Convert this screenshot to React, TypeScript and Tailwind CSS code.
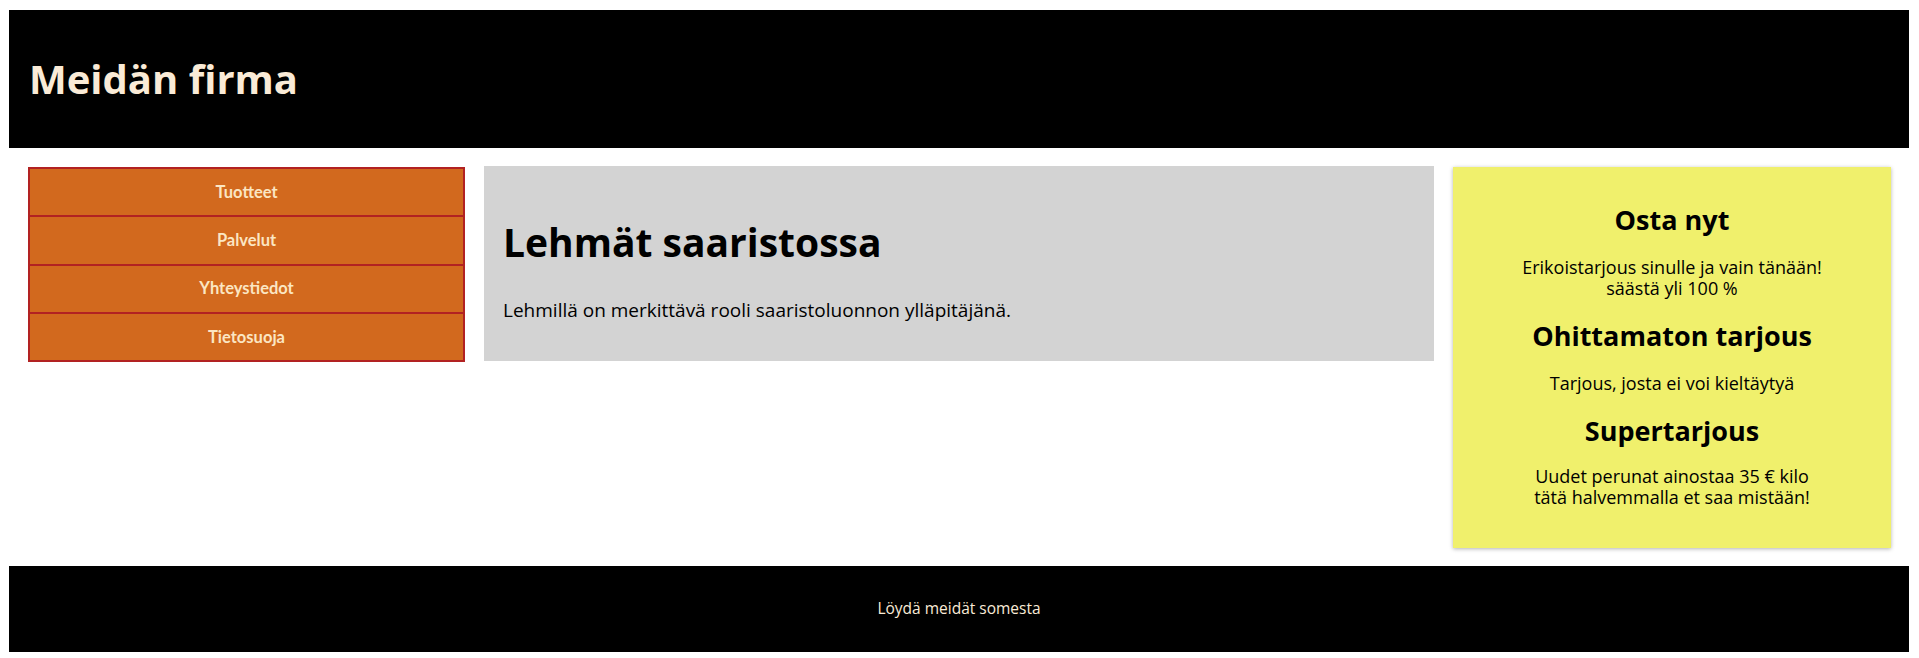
const navItems = ['Tuotteet', 'Palvelut', 'Yhteystiedot', 'Tietosuoja'];

const offers = [
  { title: 'Osta nyt', lines: ['Erikoistarjous sinulle ja vain tänään!', 'säästä yli 100 %'] },
  { title: 'Ohittamaton tarjous', lines: ['Tarjous, josta ei voi kieltäytyä'] },
  { title: 'Supertarjous', lines: ['Uudet perunat ainostaa 35 € kilo', 'tätä halvemmalla et saa mistään!'] },
];

export default function App() {
  return (
    <div className="min-h-screen bg-white pt-[10px] pl-[9px] pr-[10px] pb-[10px] font-['Open_Sans',sans-serif]">
      {/* header */}
      <header className="flex h-[138px] items-center bg-black pl-5">
        <h1 className="text-[40px] font-bold leading-[48px] text-[#faebd7]">Meidän firma</h1>
      </header>

      <div className="mt-[19px] flex items-start gap-[19px] pl-[19px]">
        {/* navigation */}
        <nav className="w-[437px] border-x-2 border-t-2 border-[#b22222] bg-[#d2691e]">
          <ul>
            {navItems.map(item => (
              <li
                key={item}
                className="flex h-[48.3px] items-center justify-center border-b-2 border-[#b22222] font-['Lato',sans-serif] text-[16.5px] font-bold text-[#fbe6c3]"
              >
                {item}
              </li>
            ))}
          </ul>
        </nav>

        {/* main article */}
        <main className="-mt-px h-[195px] w-[950px] bg-[#d3d3d3] px-[19px] pt-[52px]">
          <h2 className="text-[39px] font-bold leading-[48px] text-black">Lehmät saaristossa</h2>
          <p className="mt-[32px] text-[19px] leading-[24px] text-black">
            Lehmillä on merkittävä rooli saaristoluonnon ylläpitäjänä.
          </p>
        </main>

        {/* offers */}
        <aside className="w-[438px] bg-[#f0f06c] pt-[35px] pb-[40px] text-center text-black shadow-[0_1px_4px_rgba(0,0,0,0.3)]">
          {offers.map((offer, i) => (
            <div key={offer.title} className={i === 0 ? '' : 'mt-[19px]'}>
              <h3 className="text-[27px] font-bold leading-[36px]">{offer.title}</h3>
              <p className={`${i === 2 ? 'mt-[17px]' : 'mt-[19px]'} text-[18px] leading-[21px]`}>
                {offer.lines.map(line => (
                  <span key={line} className="block">
                    {line}
                  </span>
                ))}
              </p>
            </div>
          ))}
        </aside>
      </div>

      {/* footer */}
      <footer className="mt-[18px] flex h-[86px] items-center justify-center bg-black">
        <p className="text-[15.5px] text-[#faebd7]">Löydä meidät somesta</p>
      </footer>
    </div>
  );
}
